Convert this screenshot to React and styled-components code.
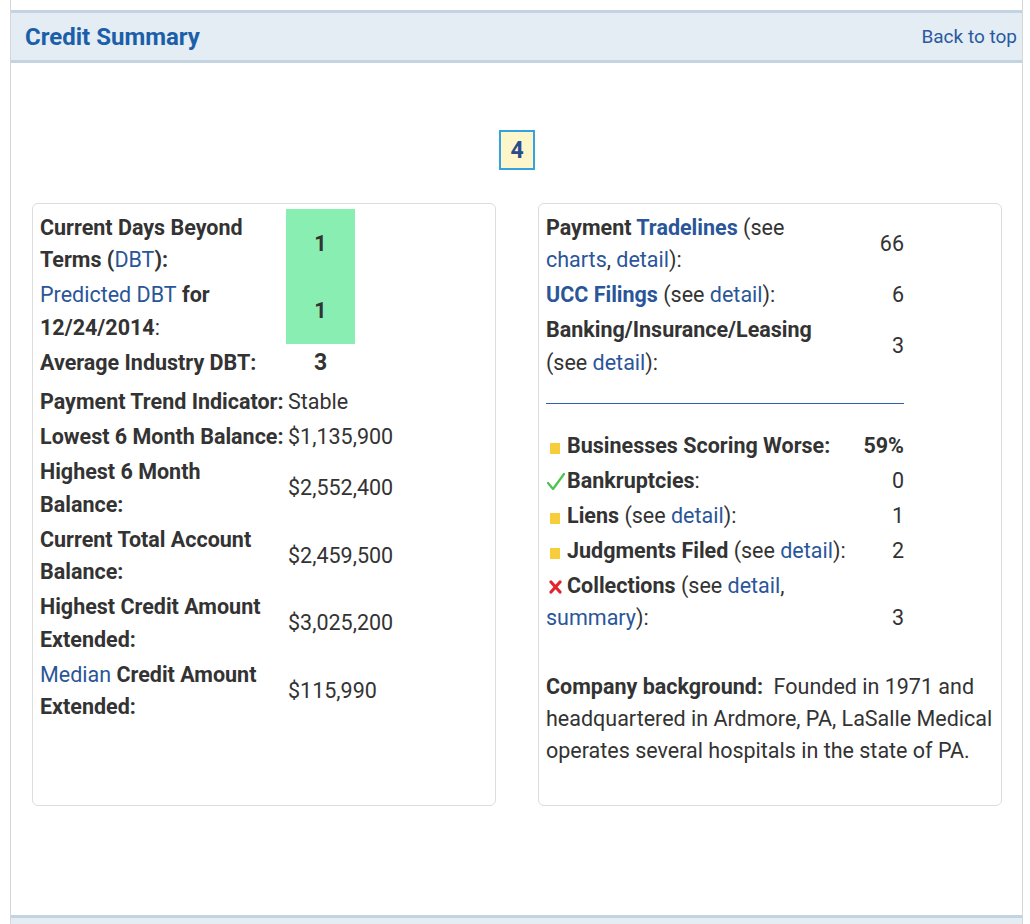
import React from 'react';
import styled, { createGlobalStyle } from 'styled-components';

const GlobalStyle = createGlobalStyle`
  body {
    margin: 0;
    background: #fff;
    font-family: Roboto, "Liberation Sans", Arial, sans-serif;
    color: #333;
  }
`;

const Page = styled.div`
  margin: 0 7px 0 10px;
`;

const Section = styled.section`
  border-left: 1px solid #d6d6d6;
  border-right: 1px solid #d6d6d6;
  padding-top: ${p => p.$top || 0}px;
`;

const Header = styled.div`
  display: flex;
  align-items: center;
  justify-content: space-between;
  height: 47px;
  padding: 0 5px 0 14px;
  background: #e4ecf4;
  border-top: 3px solid #c4d3e1;
  border-bottom: 3px solid #c4d3e1;
`;

const Title = styled.h2`
  margin: 0;
  font-size: 24px;
  font-weight: 700;
  color: #1b5fa9;
`;

const TopLink = styled.a`
  font-size: 19px;
  color: #2a5a9e;
  text-decoration: none;
`;

const Body = styled.div`
  padding: 67px 20px 109px 21px;
`;

const ScoreRow = styled.div`
  display: flex;
  justify-content: center;
`;

const ScoreBox = styled.div`
  width: 32px;
  height: 36px;
  display: flex;
  align-items: center;
  justify-content: center;
  background: #fdf6cb;
  border: 2px solid #35a2e0;
  font-size: 23px;
  font-weight: 700;
  color: #2b4c8c;
`;

const Panels = styled.div`
  display: grid;
  grid-template-columns: 464px 464px;
  column-gap: 42px;
  margin-top: 33px;
`;

const Panel = styled.div`
  height: 603px;
  box-sizing: border-box;
  border: 1px solid #dcdcdc;
  border-radius: 6px;
  padding: 5px 6px;
  font-size: 21.5px;
  line-height: 32.5px;
`;

const Table = styled.table`
  border-collapse: collapse;
  width: ${p => p.$width || 'auto'};
  margin-top: ${p => p.$mt || 0}px;
`;

const Label = styled.td`
  padding: 2.5px 1px 0;
  width: ${p => p.$w || 'auto'};
  font-weight: 700;
  vertical-align: middle;
`;

const Value = styled.td`
  padding: 2.5px 1px 0;
  width: ${p => p.$w || 'auto'};
  text-align: ${p => p.$align || 'left'};
  vertical-align: ${p => p.$valign || 'middle'};
  background: ${p => (p.$good ? '#88eeb1' : 'transparent')};
  font-weight: ${p => (p.$bold ? 700 : 400)};
  font-size: ${p => (p.$big ? '23px' : 'inherit')};
  white-space: nowrap;
`;

const Link = styled.a`
  color: #2a5699;
  text-decoration: none;
  font-weight: ${p => (p.$bold ? 700 : 400)};
`;

const Plain = styled.span`
  font-weight: 400;
`;

const Divider = styled.div`
  width: 358px;
  height: 1px;
  margin: 24px 0 0 1px;
  background: #2f62ad;
`;

const Square = styled.span`
  display: inline-block;
  width: 10px;
  height: 11px;
  margin: 0 7px 0 4px;
  background: #f7cd3c;
  vertical-align: -1px;
`;

const Mark = styled.svg`
  display: inline-block;
  vertical-align: -3px;
  margin-right: 2px;
`;

const Background = styled.p`
  margin: 36px 0 0 1px;
  line-height: 32px;
  font-weight: 400;
`;

const Check = () => (
  <Mark width="19" height="19" viewBox="0 0 19 19">
    <path d="M2 11 L7 17 L18 2" fill="none" stroke="#4cc24f" strokeWidth="2.2" strokeLinecap="round" strokeLinejoin="round" />
  </Mark>
);

const Cross = () => (
  <Mark width="19" height="14" viewBox="0 0 19 14" style={{ verticalAlign: '-1px' }}>
    <path d="M5 2 L14 12 M14 2 L5 12" fill="none" stroke="#e0262c" strokeWidth="3.2" strokeLinecap="round" />
  </Mark>
);

const App = () => (
  <Page>
    <GlobalStyle />
    <Section $top={10}>
      <Header>
        <Title>Credit Summary</Title>
        <TopLink href="#top">Back to top</TopLink>
      </Header>
      <Body>
        <ScoreRow>
          <ScoreBox>4</ScoreBox>
        </ScoreRow>
        <Panels>
          <Panel>
            <Table>
              <tbody>
                <tr>
                  <Label $w="245px">Current Days Beyond Terms (<Link>DBT</Link>):</Label>
                  <Value $w="67px" $align="center" $good $bold>1</Value>
                </tr>
                <tr>
                  <Label><Link>Predicted DBT</Link> for 12/24/2014<Plain>:</Plain></Label>
                  <Value $align="center" $good $bold>1</Value>
                </tr>
                <tr>
                  <Label>Average Industry DBT:</Label>
                  <Value $align="center" $bold $big>3</Value>
                </tr>
              </tbody>
            </Table>
            <Table $mt={4.5}>
              <tbody>
                <tr>
                  <Label $w="246px">Payment Trend Indicator:</Label>
                  <Value>Stable</Value>
                </tr>
                <tr>
                  <Label>Lowest 6 Month Balance:</Label>
                  <Value>$1,135,900</Value>
                </tr>
                <tr>
                  <Label>Highest 6 Month Balance:</Label>
                  <Value>$2,552,400</Value>
                </tr>
                <tr>
                  <Label>Current Total Account Balance:</Label>
                  <Value>$2,459,500</Value>
                </tr>
                <tr>
                  <Label>Highest Credit Amount Extended:</Label>
                  <Value>$3,025,200</Value>
                </tr>
                <tr>
                  <Label><Link>Median</Link> Credit Amount Extended:</Label>
                  <Value>$115,990</Value>
                </tr>
              </tbody>
            </Table>
          </Panel>
          <Panel>
            <Table $width="360px">
              <tbody>
                <tr>
                  <Label $w="280px">Payment <Link $bold>Tradelines</Link> <Plain>(see <Link>charts</Link>, <Link>detail</Link>):</Plain></Label>
                  <Value $align="right">66</Value>
                </tr>
                <tr>
                  <Label><Link $bold>UCC Filings</Link> <Plain>(see <Link>detail</Link>):</Plain></Label>
                  <Value $align="right">6</Value>
                </tr>
                <tr>
                  <Label>Banking/Insurance/Leasing <Plain>(see <Link>detail</Link>):</Plain></Label>
                  <Value $align="right">3</Value>
                </tr>
              </tbody>
            </Table>
            <Divider />
            <Table $width="360px" $mt={23}>
              <tbody>
                <tr>
                  <Label $w="312px"><Square />Businesses Scoring Worse:</Label>
                  <Value $align="right" $bold>59%</Value>
                </tr>
                <tr>
                  <Label><Check />Bankruptcies<Plain>:</Plain></Label>
                  <Value $align="right">0</Value>
                </tr>
                <tr>
                  <Label><Square />Liens <Plain>(see <Link>detail</Link>):</Plain></Label>
                  <Value $align="right">1</Value>
                </tr>
                <tr>
                  <Label><Square />Judgments Filed <Plain>(see <Link>detail</Link>):</Plain></Label>
                  <Value $align="right">2</Value>
                </tr>
                <tr>
                  <Label><Cross />Collections <Plain>(see <Link>detail</Link>, <Link>summary</Link>):</Plain></Label>
                  <Value $align="right" $valign="bottom">3</Value>
                </tr>
              </tbody>
            </Table>
            <Background>
              <b>Company background:</b>&nbsp; Founded in 1971 and headquartered in Ardmore, PA, LaSalle Medical operates several hospitals in the state of PA.
            </Background>
          </Panel>
        </Panels>
      </Body>
    </Section>
    <Section>
      <Header />
    </Section>
  </Page>
);

export default App;
